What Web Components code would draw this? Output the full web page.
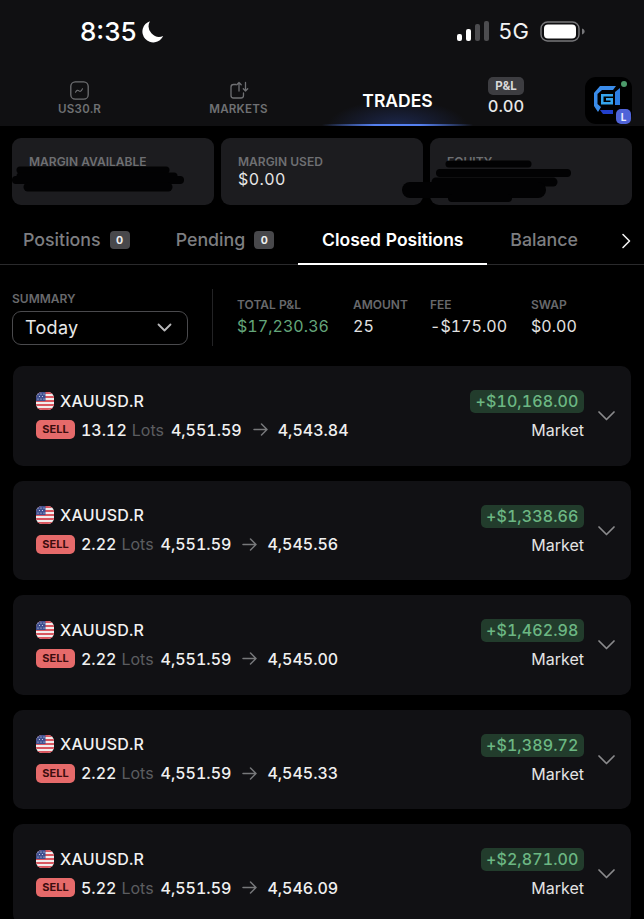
<!DOCTYPE html>
<html><head><meta charset="utf-8">
<style>
html,body{margin:0;padding:0;background:#000;}
body{width:644px;height:919px;overflow:hidden;font-family:Inter,"Liberation Sans",sans-serif;color:#fff;font-variant-numeric:tabular-nums;}
main{display:flex;flex-direction:column;}
</style></head><body>
<main>
<x-status></x-status>
<x-nav></x-nav>
<x-stats></x-stats>
<x-tabs></x-tabs>
<x-summary></x-summary>
<x-list>
<x-trade lots="13.12" close="4,543.84" pnl="+$10,168.00"></x-trade>
<x-trade lots="2.22" close="4,545.56" pnl="+$1,338.66"></x-trade>
<x-trade lots="2.22" close="4,545.00" pnl="+$1,462.98"></x-trade>
<x-trade lots="2.22" close="4,545.33" pnl="+$1,389.72"></x-trade>
<x-trade lots="5.22" close="4,546.09" pnl="+$2,871.00"></x-trade>
</x-list>
</main>
<script>
function def(name,html){
  customElements.define(name,class extends HTMLElement{
    constructor(){super();this.attachShadow({mode:'open'});}
    connectedCallback(){
      this.shadowRoot.innerHTML=typeof html==='function'?html(this):html;
    }
  });
}
def('x-status',`<style>
:host{display:flex;height:62px;background:#101012;align-items:center;padding:0 58px 0 80px;box-sizing:border-box;justify-content:space-between}
.l{display:flex;align-items:center;gap:4px;font-size:26px;font-weight:500;font-variant-numeric:normal}
.r{display:flex;align-items:center;gap:11px;font-size:22px;font-weight:400;color:#f2f2f2}
svg{display:block}
.sig{margin-right:-2px}
</style>
<div class="l"><span>8:35</span><svg width="23" height="23" viewBox="0 0 22 22"><path d="M8.5 1.2A10.2 10.2 0 0 0 21.2 15.4 10.4 10.4 0 1 1 8.5 1.2Z" fill="#fff"/></svg></div>
<div class="r"><svg class="sig" width="32" height="20" viewBox="0 0 32 20"><rect x="0" y="13" width="5" height="7" rx="2" fill="#fff"/><rect x="9" y="8" width="5" height="12" rx="2" fill="#fff"/><rect x="18" y="3" width="5" height="17" rx="2" fill="#4c4c4f"/><rect x="27" y="0" width="5" height="20" rx="2" fill="#4c4c4f"/></svg><span>5G</span><svg width="46" height="21" viewBox="0 0 46 21"><rect x="1" y="1" width="38" height="19" rx="6.5" fill="none" stroke="#77777a" stroke-width="1.4"/><rect x="4" y="3.5" width="32" height="14" rx="4" fill="#fff"/><path d="M42 7.5c1.6.4 2.6 1.6 2.6 3s-1 2.6-2.6 3Z" fill="#77777a"/></svg></div>`);
def('x-nav',`<style>
:host{display:grid;grid-template-columns:159px 159px 159px 58px 1fr;height:64px;background:#101012;box-sizing:border-box;position:relative;align-items:stretch}
.it{display:flex;flex-direction:column;align-items:center;justify-content:flex-start;gap:2px;padding-top:19px;font-size:11.6px;font-weight:600;color:#6f7073;letter-spacing:.2px}
.it svg{display:block}
.act{position:relative;align-items:center;justify-content:center;padding:12px 0 0;color:#fff;font-size:17.5px;font-weight:600;letter-spacing:0;background:radial-gradient(ellipse 70px 26px at 50% 100%,rgba(50,80,180,.36),rgba(50,80,180,0))}
.act::after{content:"";position:absolute;left:4px;right:4px;bottom:0;height:2px;background:linear-gradient(90deg,rgba(70,110,240,0),#5580f0 35%,#5580f0 65%,rgba(70,110,240,0))}
.pl{display:flex;flex-direction:column;align-items:center;padding-top:15px;gap:2px}
.pl b{font-size:11.5px;font-weight:700;background:#3d3d41;color:#d8d8da;border-radius:5px;padding:0 7px;height:18px;line-height:18px;}
.pl span{font-size:16.5px;font-weight:500;color:#e8e8e8;line-height:19px}
.logo{justify-self:end;margin:15px 12px 0 0;width:47px;height:47px;border-radius:11px;background:#000;position:relative;}
.logo svg{position:absolute;left:8px;top:8px}
.dot{position:absolute;right:5px;top:4px;width:6px;height:6px;border-radius:50%;background:#4c9a6a}
.badge{position:absolute;right:1px;bottom:0;width:15px;height:15px;border-radius:5px;background:#4f63d8;color:#eef;font-size:10px;font-weight:700;display:flex;align-items:center;justify-content:center;}
</style>
<div class="it"><svg width="19" height="19" viewBox="0 0 19 19" fill="none" stroke="#6f7073"><rect x=".8" y=".8" width="17.4" height="17.4" rx="4.5" stroke-width="1.3"/><path d="M5.5 11.2c1.2-2 2.2-2.400 3.400-1.400s2.200.6 3.600-2" stroke-width="1.100" stroke-linecap="round"/></svg><span>US30.R</span></div>
<div class="it"><svg width="20" height="19" viewBox="0 0 20 19" fill="none" stroke="#6f7073" stroke-width="1.300" stroke-linecap="round" stroke-linejoin="round"><path d="M7 3.500H4.500A2.500 2.500 0 0 0 2 6v8.500A2.500 2.500 0 0 0 4.500 17h7.500a2.500 2.500 0 0 0 2.500-2.500V12"/><path d="M10 10V1.500M7.800 3.700 10 1.500 12.200 3.700M16.500 1.500V10M14.300 7.800 16.500 10 18.700 7.800"/></svg><span>MARKETS</span></div>
<div class="it act"><span>TRADES</span></div>
<div class="pl"><b>P&amp;L</b><span>0.00</span></div>
<div class="logo"><svg width="30" height="30" viewBox="0 0 30 30"><path d="M1 8 7 1H23L20 5H9L4.500 9V19L8 22 5 27 1 21Z" fill="#3a8cea"/><path d="M7 25H20V29H10Z" fill="#2240cc"/><path d="M22 7 27 3V20H22Z" fill="#2d7ee2"/><path d="M8 9H20V11.500H10.500V17H17.500V15.500H13V13H20V19.500H8Z" fill="#35a5ec"/></svg><i class="dot"></i><span class="badge">L</span></div>`);
def('x-stat',h=>`<style>
:host{display:block;flex:1;height:67px;background:#1c1c1f;border-radius:9px;box-sizing:border-box;padding:16px 0 0 17px;position:relative}
.k{font-size:12px;font-weight:600;color:#6e6f72;line-height:15px;white-space:nowrap}
.v{font-size:16px;color:#e6e6e6;line-height:20px;letter-spacing:.4px}
</style><div class="k">${h.getAttribute('k')}</div><div class="v">${h.getAttribute('v')||''}</div>`);
customElements.define('x-stats',class extends HTMLElement{
  constructor(){super();this.attachShadow({mode:'open'}).innerHTML=`<style>
:host{display:flex;gap:7px;padding:12px 12px 0;position:relative}
svg{position:absolute;left:0;top:0;pointer-events:none}
</style>
<x-stat k="MARGIN AVAILABLE"></x-stat><x-stat k="MARGIN USED" v="$0.00"></x-stat><x-stat k="EQUITY"></x-stat>
<svg width="644" height="80" viewBox="0 0 644 80" fill="none" stroke="#020203" stroke-linecap="round">
<path d="M20 44H166" stroke-width="7"/><path d="M20 50H174" stroke-width="7"/><path d="M16 54H180" stroke-width="8"/><path d="M28 61H168" stroke-width="9"/>
<path d="M449 38H528" stroke-width="7"/><path d="M440 47H567" stroke-width="8"/><path d="M436 56H553" stroke-width="9"/><path d="M410 64H538" stroke-width="16"/><path d="M452 72H508" stroke-width="8"/>
</svg>`;}
});
def('x-tabs',`<style>
:host{display:flex;height:60px;box-sizing:border-box;border-bottom:1px solid #2a2a2c;position:relative;font-size:17.8px;font-weight:500;color:#7d7e81;align-items:stretch;padding-left:23px}
.t{display:flex;align-items:center;gap:9px;padding-top:10px;box-sizing:border-box}
.b{width:20px;height:18px;background:#48484b;border-radius:4px;color:#eee;font-size:11px;font-weight:700;text-align:center;line-height:18px}
.on{color:#fff;font-weight:600;position:relative;width:189px;justify-content:center;margin-left:24px;margin-right:23px;font-size:17.5px}
.on::after{content:"";position:absolute;left:0;right:0;bottom:-1px;height:2px;background:#fff}
svg{position:absolute;left:621px;top:28px}
</style>
<div class="t"><span>Positions</span><span class="b">0</span></div>
<div class="t" style="margin-left:46px"><span>Pending</span><span class="b">0</span></div>
<div class="t on"><span>Closed Positions</span></div>
<div class="t"><span>Balance</span></div>
<svg width="10" height="16" viewBox="0 0 10 16" fill="none" stroke="#f0f0f0" stroke-width="1.600" stroke-linecap="round" stroke-linejoin="round"><path d="M2 1.500 8.500 8 2 14.500"/></svg>`);
def('x-summary',`<style>
:host{display:flex;align-items:flex-start;height:101px;box-sizing:border-box;padding:26px 0 0 12px}
.k{font-size:12px;font-weight:600;color:#68696c;line-height:15px;white-space:nowrap}
.sel{margin-top:5px;width:176px;height:34px;box-sizing:border-box;border:1px solid #4a4a4d;border-radius:9px;display:flex;align-items:center;justify-content:space-between;padding:0 15px 2px 12px;font-size:18px;color:#e8e8e8;letter-spacing:.3px}
.div{width:1px;height:57px;background:#232325;margin:-2px 24px 0 24px}
.c{padding-top:6px}
.v{font-size:16px;line-height:20px;color:#e2e2e2;letter-spacing:.05px;margin-top:4px;white-space:nowrap}
.g{color:#64a67a}
</style>
<div><div class="k">SUMMARY</div><div class="sel"><span>Today</span><svg width="15" height="9" viewBox="0 0 15 9" fill="none" stroke="#b8b8ba" stroke-width="1.800" stroke-linecap="round" stroke-linejoin="round"><path d="M1.500 1.500 7.500 7.500 13.500 1.500"/></svg></div></div>
<div class="div"></div>
<div class="c" style="width:116px"><div class="k">TOTAL P&amp;L</div><div class="v g">$17,230.36</div></div>
<div class="c" style="width:77px"><div class="k">AMOUNT</div><div class="v">25</div></div>
<div class="c" style="width:101px"><div class="k">FEE</div><div class="v">-$175.00</div></div>
<div class="c"><div class="k">SWAP</div><div class="v">$0.00</div></div>`);
def('x-list',`<style>:host{display:flex;flex-direction:column;gap:15px;padding:0 13px}</style><slot></slot>`);
def('x-trade',h=>`<style>
:host{display:flex;height:99.500px;flex:none;background:#111114;border-radius:10px;box-sizing:border-box;padding:24px 16px 0 23px;justify-content:space-between;align-items:flex-start}
.l{display:flex;flex-direction:column;gap:8px}
.r1,.r2{display:flex;align-items:center;height:21px}
.r1{gap:6px;font-size:16px;font-weight:500;color:#f2f2f2;letter-spacing:.2px}
.r2{font-size:16px;font-weight:500;color:#f0f0f0;letter-spacing:0;white-space:nowrap}
.s{width:39px;height:19px;background:#e66a6a;border-radius:5px;color:#3b0d0e;font-size:11px;font-weight:700;text-align:center;line-height:19px;margin-right:6px;letter-spacing:0}
.lots{color:#5c5d60;font-weight:400;margin:0 7px 0 5px}
.a{margin:0 10px 0 11px;display:block}
.right{display:flex;align-items:flex-start;gap:14px}
.col{display:flex;flex-direction:column;align-items:flex-end;gap:7px}
.p{height:23px;line-height:23px;padding:0 5.500px;border-radius:5px;background:#223c2c;color:#6cb783;font-size:16px;font-weight:500;letter-spacing:.1px;white-space:nowrap}
.m{font-size:16px;color:#e4e4e4;line-height:21px}
.ch{margin-top:21px;display:block}
svg.f{display:block;border-radius:6px}
</style>
<div class="l"><div class="r1"><svg class="f" width="18" height="18" viewBox="0 0 18 18"><rect width="18" height="18" fill="#f1ecec"/><g fill="#d9565f"><rect width="18" height="2"/><rect y="4" width="18" height="2"/><rect y="8" width="18" height="2"/><rect y="12" width="18" height="2"/><rect y="16" width="18" height="2"/></g><rect width="9.500" height="9" fill="#3f4f8f"/><g fill="#dfe3f2"><circle cx="2" cy="2" r=".6"/><circle cx="5" cy="2" r=".6"/><circle cx="8" cy="2" r=".6"/><circle cx="3.500" cy="4.500" r=".6"/><circle cx="6.500" cy="4.500" r=".6"/><circle cx="2" cy="7" r=".6"/><circle cx="5" cy="7" r=".6"/><circle cx="8" cy="7" r=".6"/></g></svg><span>XAUUSD.R</span></div>
<div class="r2"><span class="s">SELL</span><span>${h.getAttribute('lots')}</span><span class="lots">Lots</span><span>4,551.59</span><svg class="a" width="15" height="13" viewBox="0 0 15 13" fill="none" stroke="#77787a" stroke-width="1.500" stroke-linecap="round" stroke-linejoin="round"><path d="M1 6.500H14M8.500 1 14 6.500 8.500 12"/></svg><span>${h.getAttribute('close')}</span></div></div>
<div class="right"><div class="col"><div class="p">${h.getAttribute('pnl')}</div><div class="m">Market</div></div><svg class="ch" width="17" height="10" viewBox="0 0 17 10" fill="none" stroke="#8a8a8c" stroke-width="1.700" stroke-linecap="round" stroke-linejoin="round"><path d="M1 1 8.500 8.500 16 1"/></svg></div>`);
</script>
</body></html>
